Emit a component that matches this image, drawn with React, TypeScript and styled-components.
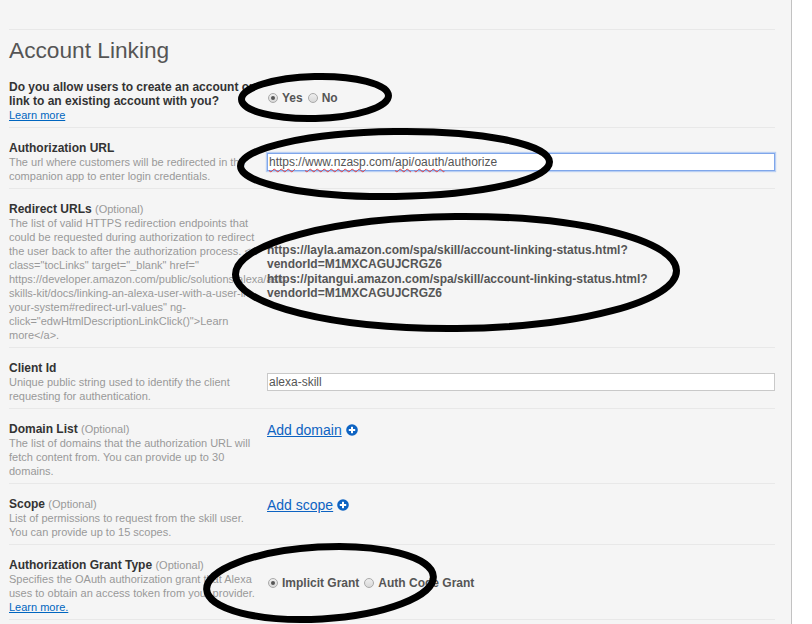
import React from 'react';
import styled, { createGlobalStyle } from 'styled-components';

const GlobalStyle = createGlobalStyle`
  html, body { margin: 0; padding: 0; background: #ffffff; }
  body { font-family: "Liberation Sans", Arial, sans-serif; }
  * { box-sizing: border-box; }
`;

const Panel = styled.div`
  position: relative;
  width: 792px;
  min-height: 624px;
  background: #f5f5f5;
  border-right: 1px solid #c2c2c2;
  padding: 29px 16px 0 9px;
`;

const Section = styled.section`
  border-top: 1px solid #e8e8e8;
`;

const Title = styled.h2`
  margin: 0 0 4px;
  padding-top: 7px;
  font-size: 22.7px;
  line-height: 26px;
  font-weight: normal;
  color: #555555;
`;

const Row = styled.div`
  display: grid;
  grid-template-columns: 254px 1fr;
  column-gap: 4px;
  padding: 13px 0 5px;
  border-bottom: 1px solid #e8e8e8;
`;

const InfoCell = styled.div`
  min-width: 0;
  font-size: 11px;
  line-height: 14px;
`;

const Label = styled.div`
  font-size: 12px;
  line-height: 14px;
  font-weight: bold;
  color: #333333;
`;

const Optional = styled.span`
  font-size: 11px;
  font-weight: normal;
  color: #999999;
`;

const Description = styled.div`
  font-size: 11px;
  line-height: 14px;
  color: #999999;
`;

const LearnLink = styled.a`
  display: block;
  width: fit-content;
  font-size: 11px;
  line-height: 14px;
  color: #0066c0;
  text-decoration: underline;
  cursor: pointer;
`;

const ControlCell = styled.div<{ $align?: 'center' | 'start'; $lift?: number }>`
  display: flex;
  align-self: ${(p) => (p.$align === 'start' ? 'start' : 'center')};
  margin-bottom: ${(p) => p.$lift ?? 0}px;
  min-width: 0;
`;

const RadioGroup = styled.div`
  display: flex;
  align-items: center;
  padding-left: 1px;
`;

const RadioInput = styled.input.attrs({ type: 'radio' })`
  appearance: none;
  -webkit-appearance: none;
  width: 10px;
  height: 10px;
  margin: 0 4px 0 0;
  border: 1px solid #a9a9a9;
  border-radius: 50%;
  background: linear-gradient(#eeeeee, #d8d8d8);
  position: relative;
  flex: none;
  &:checked::after {
    content: '';
    position: absolute;
    left: 2px;
    top: 2px;
    width: 4px;
    height: 4px;
    border-radius: 50%;
    background: #555555;
  }
`;

const RadioText = styled.label`
  font-size: 12px;
  line-height: 14px;
  font-weight: bold;
  color: #555555;
  margin-right: 5px;
`;

const FieldBox = styled.div<{ $focused?: boolean }>`
  width: 100%;
  height: 18px;
  display: flex;
  align-items: center;
  padding: 0 1px;
  background: #ffffff;
  border: 1px solid ${(p) => (p.$focused ? '#7fa6ea' : '#c9c9c9')};
  box-shadow: ${(p) => (p.$focused ? '0 0 1px 1px #b9cff3' : 'none')};
  font-size: 12px;
  color: #555555;
  white-space: nowrap;
`;

const TextInput = styled.input`
  width: 100%;
  height: 18px;
  padding: 0 1px;
  margin: 0;
  background: #ffffff;
  border: 1px solid #c9c9c9;
  outline: none;
  font-family: "Liberation Sans", Arial, sans-serif;
  font-size: 12px;
  color: #555555;
`;

const Misspelled = styled.span`
  text-decoration-line: underline;
  text-decoration-style: wavy;
  text-decoration-color: #e23b3b;
  text-decoration-thickness: 1px;
  text-underline-offset: 2px;
`;

const UrlList = styled.div`
  max-width: 420px;
`;

const UrlItem = styled.div`
  font-size: 12px;
  line-height: 14px;
  font-weight: bold;
  color: #555555;
  margin-bottom: 1px;
`;

const AddLink = styled.a`
  display: inline-flex;
  align-items: center;
  gap: 4px;
  font-size: 14px;
  line-height: 16px;
  color: #0d63c2;
  cursor: pointer;
  & > span {
    text-decoration: underline;
  }
`;

const Annotations = styled.svg`
  position: absolute;
  left: 0;
  top: 0;
  pointer-events: none;
`;

const PlusCircle = () => (
  <svg width="12" height="12" viewBox="0 0 12 12" aria-hidden="true">
    <circle cx="6" cy="6" r="5.8" fill="#0d63c2" />
    <rect x="2.8" y="5" width="6.4" height="2" fill="#ffffff" />
    <rect x="5" y="2.8" width="2" height="6.4" fill="#ffffff" />
  </svg>
);

const redirectDescription =
  'The list of valid HTTPS redirection endpoints that could be requested during authorization to redirect the user back to after the authorization process. <a class="tocLinks" target="_blank" href=" https://developer.amazon.com/public/solutions/alexa/ask-skills-kit/docs/linking-an-alexa-user-with-a-user-in-your-system#redirect-url-values" ng-click="edwHtmlDescriptionLinkClick()">Learn more</a>.';

export default function App() {
  return (
    <>
      <GlobalStyle />
      <Panel>
        <Section>
          <Title>Account Linking</Title>

          <Row>
            <InfoCell>
              <Label>Do you allow users to create an account or link to an existing account with you?</Label>
              <LearnLink>Learn more</LearnLink>
            </InfoCell>
            <ControlCell $lift={7}>
              <RadioGroup>
                <RadioInput name="linking" id="yes" defaultChecked />
                <RadioText htmlFor="yes">Yes</RadioText>
                <RadioInput name="linking" id="no" />
                <RadioText htmlFor="no">No</RadioText>
              </RadioGroup>
            </ControlCell>
          </Row>

          <Row>
            <InfoCell>
              <Label>Authorization URL</Label>
              <Description>
                The url where customers will be redirected in the companion app to enter login credentials.
              </Description>
            </InfoCell>
            <ControlCell>
              <FieldBox $focused role="textbox">
                <Misspelled>https</Misspelled>://<Misspelled>www.nzasp</Misspelled>.com/
                <Misspelled>api</Misspelled>/<Misspelled>oauth</Misspelled>/authorize
              </FieldBox>
            </ControlCell>
          </Row>

          <Row>
            <InfoCell>
              <Label>
                Redirect URLs <Optional>(Optional)</Optional>
              </Label>
              <Description>{redirectDescription}</Description>
            </InfoCell>
            <ControlCell>
              <UrlList>
                <UrlItem>https://layla.amazon.com/spa/skill/account-linking-status.html?vendorId=M1MXCAGUJCRGZ6</UrlItem>
                <UrlItem>https://pitangui.amazon.com/spa/skill/account-linking-status.html?vendorId=M1MXCAGUJCRGZ6</UrlItem>
              </UrlList>
            </ControlCell>
          </Row>

          <Row>
            <InfoCell>
              <Label>Client Id</Label>
              <Description>Unique public string used to identify the client requesting for authentication.</Description>
            </InfoCell>
            <ControlCell>
              <TextInput defaultValue="alexa-skill" readOnly />
            </ControlCell>
          </Row>

          <Row>
            <InfoCell>
              <Label>
                Domain List <Optional>(Optional)</Optional>
              </Label>
              <Description>
                The list of domains that the authorization URL will fetch content from. You can provide up to 30 domains.
              </Description>
            </InfoCell>
            <ControlCell $align="start">
              <AddLink>
                <span>Add domain</span>
                <PlusCircle />
              </AddLink>
            </ControlCell>
          </Row>

          <Row>
            <InfoCell>
              <Label>
                Scope <Optional>(Optional)</Optional>
              </Label>
              <Description>List of permissions to request from the skill user. You can provide up to 15 scopes.</Description>
            </InfoCell>
            <ControlCell $align="start">
              <AddLink>
                <span>Add scope</span>
                <PlusCircle />
              </AddLink>
            </ControlCell>
          </Row>

          <Row>
            <InfoCell>
              <Label>
                Authorization Grant Type <Optional>(Optional)</Optional>
              </Label>
              <Description>
                Specifies the OAuth authorization grant that Alexa uses to obtain an access token from your provider.
              </Description>
              <LearnLink>Learn more.</LearnLink>
            </InfoCell>
            <ControlCell $lift={6}>
              <RadioGroup>
                <RadioInput name="grant" id="implicit" defaultChecked />
                <RadioText htmlFor="implicit">Implicit Grant</RadioText>
                <RadioInput name="grant" id="authcode" />
                <RadioText htmlFor="authcode">Auth Code Grant</RadioText>
              </RadioGroup>
            </ControlCell>
          </Row>
        </Section>

        <Annotations width="812" height="624" viewBox="0 0 812 624">
          <g fill="none" stroke="#000000" strokeWidth="7">
            <ellipse cx="315" cy="97.5" rx="73.5" ry="21" transform="rotate(-1.5 315 97.5)" />
            <ellipse cx="395" cy="164" rx="154.5" ry="32.5" transform="rotate(-0.8 395 164)" />
            <ellipse cx="456" cy="272.5" rx="220.5" ry="56" transform="rotate(-0.5 456 272.5)" />
            <ellipse cx="320" cy="583" rx="113.5" ry="36" transform="rotate(-3.3 320 583)" />
          </g>
        </Annotations>
      </Panel>
    </>
  );
}
